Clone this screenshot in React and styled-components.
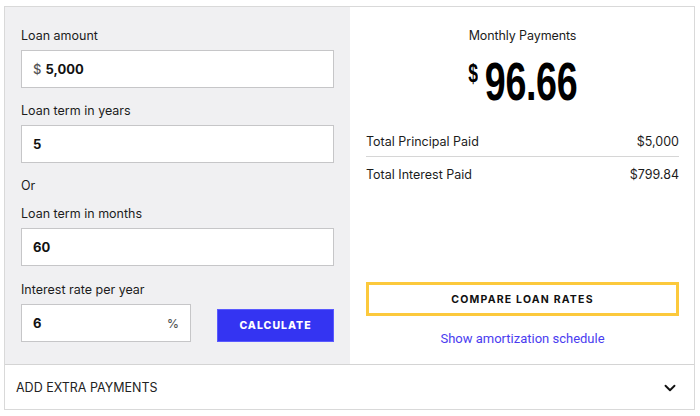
import React from "react";
import styled, { createGlobalStyle } from "styled-components";
import { ChevronDown } from "lucide-react";

const GlobalStyle = createGlobalStyle`
  html, body {
    margin: 0;
    padding: 0;
    background: #ffffff;
  }
  body {
    font-family: Inter, "Noto Sans", sans-serif;
    color: #1c1c1c;
  }
  * {
    box-sizing: border-box;
  }
`;

const Card = styled.div`
  margin: 6px 5px 6px 4px;
  width: 691px;
  border: 1px solid #d9d9d9;
  background: #fff;
`;

const Top = styled.div`
  display: grid;
  grid-template-columns: 345px 1fr;
  height: 358px;
  border-bottom: 1px solid #d4d4d4;
`;

const FormPanel = styled.div`
  background: #f0f0f2;
  padding: 21px 16px 0 16px;
  display: flex;
  flex-direction: column;
`;

const Label = styled.div`
  font-size: 12.5px;
  line-height: 16px;
  color: #1c1c1c;
  margin-top: ${(p) => p.$mt || 0}px;
  margin-bottom: ${(p) => (p.$mb === undefined ? 6 : p.$mb)}px;
`;

const InputBox = styled.div`
  display: flex;
  align-items: center;
  width: ${(p) => p.$w || 313}px;
  height: 38px;
  background: #fff;
  border: 1px solid #c6c6c8;
  padding: 0 11px;
  font-size: 13px;
  font-weight: 700;
  color: #111;
`;

const Prefix = styled.span`
  color: #555;
  font-weight: 500;
  margin-right: 4px;
`;

const Suffix = styled.span`
  margin-left: auto;
  color: #555;
  font-weight: 500;
  font-size: 12px;
`;

const RateRow = styled.div`
  display: flex;
  align-items: flex-end;
  gap: 26px;
`;

const CalcButton = styled.button`
  width: 117px;
  height: 33px;
  border: 1px solid #5a5aff;
  background: #3434f2;
  color: #fff;
  font-family: Inter, "Noto Sans", sans-serif;
  font-size: 10.5px;
  font-weight: 800;
  letter-spacing: 1px;
  cursor: pointer;
`;

const ResultPanel = styled.div`
  padding: 21px 15px 17px 16px;
  display: flex;
  flex-direction: column;
`;

const Title = styled.div`
  text-align: center;
  font-size: 12.5px;
  line-height: 16px;
  letter-spacing: -0.1px;
`;

const Amount = styled.div`
  display: flex;
  justify-content: center;
  align-items: flex-start;
  margin-top: 12px;
  height: 52px;
  font-family: "Liberation Sans", Arial, sans-serif;
  font-weight: 700;
  color: #000;
`;

const Currency = styled.span`
  display: inline-block;
  font-size: 25px;
  line-height: 24px;
  margin-top: 5px;
  margin-right: 6px;
  transform: scaleX(0.7);
  transform-origin: right center;
`;

const Figure = styled.span`
  display: inline-block;
  font-size: 53px;
  line-height: 52px;
  letter-spacing: -0.5px;
  transform: scaleX(0.71);
  transform-origin: center;
  margin: 0 -16px 0 -18px;
`;

const SummaryRow = styled.div`
  display: flex;
  justify-content: space-between;
  font-size: 12.5px;
  line-height: 16px;
  padding: ${(p) => (p.$first ? "0 0 6px" : "10px 0 0")};
  margin-top: ${(p) => (p.$first ? 26 : 0)}px;
  border-bottom: ${(p) => (p.$first ? "1px solid #d6d6d6" : "none")};
`;

const CompareButton = styled.button`
  margin-top: auto;
  height: 34px;
  width: 100%;
  background: #fff;
  border: 3px solid #fcc93c;
  font-family: Inter, "Noto Sans", sans-serif;
  font-size: 10.5px;
  font-weight: 700;
  letter-spacing: 1.2px;
  color: #111;
  cursor: pointer;
`;

const ScheduleLink = styled.a`
  display: block;
  margin-top: 15px;
  text-align: center;
  font-family: Roboto, "Noto Sans", sans-serif;
  font-size: 13px;
  line-height: 16px;
  color: #4a3cf0;
  text-decoration: none;
  cursor: pointer;
`;

const ExtraRow = styled.div`
  height: 44px;
  display: flex;
  align-items: center;
  justify-content: space-between;
  padding: 1px 15px 0 11px;
  font-size: 12.5px;
  color: #222;
  text-transform: uppercase;
  cursor: pointer;
`;

export default function App() {
  return (
    <>
      <GlobalStyle />
      <Card>
        <Top>
          <FormPanel>
            <Label>Loan amount</Label>
            <InputBox>
              <Prefix>$</Prefix>5,000
            </InputBox>
            <Label $mt={15}>Loan term in years</Label>
            <InputBox>5</InputBox>
            <Label $mt={15} $mb={0}>
              Or
            </Label>
            <Label $mt={12}>Loan term in months</Label>
            <InputBox>60</InputBox>
            <Label $mt={16}>Interest rate per year</Label>
            <RateRow>
              <InputBox $w={170}>
                6<Suffix>%</Suffix>
              </InputBox>
              <CalcButton>CALCULATE</CalcButton>
            </RateRow>
          </FormPanel>
          <ResultPanel>
            <Title>Monthly Payments</Title>
            <Amount>
              <Currency>$</Currency>
              <Figure>96.66</Figure>
            </Amount>
            <SummaryRow $first>
              <span>Total Principal Paid</span>
              <span>$5,000</span>
            </SummaryRow>
            <SummaryRow>
              <span>Total Interest Paid</span>
              <span>$799.84</span>
            </SummaryRow>
            <CompareButton>COMPARE LOAN RATES</CompareButton>
            <ScheduleLink>Show amortization schedule</ScheduleLink>
          </ResultPanel>
        </Top>
        <ExtraRow>
          <span>Add extra payments</span>
          <ChevronDown size={18} strokeWidth={2.5} color="#111" />
        </ExtraRow>
      </Card>
    </>
  );
}
